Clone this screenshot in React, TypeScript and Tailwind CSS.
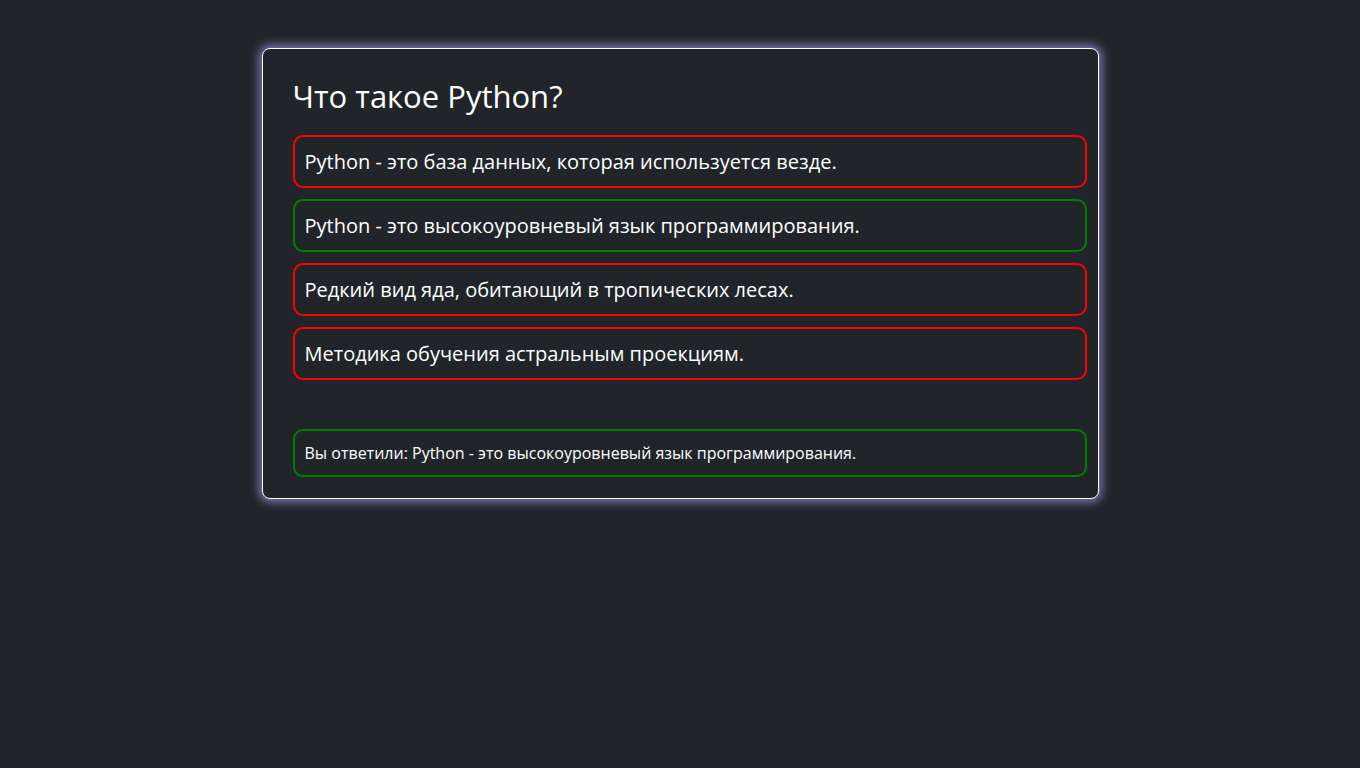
const answers = [
  { text: 'Python - это база данных, которая используется везде.', correct: false },
  { text: 'Python - это высокоуровневый язык программирования.', correct: true },
  { text: 'Редкий вид яда, обитающий в тропических лесах.', correct: false },
  { text: 'Методика обучения астральным проекциям.', correct: false },
];

export default function App() {
  return (
    <div
      className="min-h-screen bg-[#212529] text-white pt-[48px]"
      style={{ fontFamily: '"Open Sans", "Noto Sans", sans-serif' }}
    >
      <div className="mx-auto w-[837px] rounded-lg border border-white bg-[#212529] shadow-[0_0_10px_3px_rgba(150,150,230,0.75)] pl-[30px] pr-[11px] pt-[29px] pb-[21px]">
        <h1 className="text-[31px] leading-[36px] font-medium mb-[21px]">Что такое Python?</h1>

        {/* Answers */}
        <div className="flex flex-col gap-[11px]">
          {answers.map((a) => (
            <div
              key={a.text}
              className={
                'h-[53px] flex items-center rounded-[10px] border-2 px-[10px] text-[20px] ' +
                (a.correct ? 'border-[#008000]' : 'border-[#ff0000]')
              }
            >
              {a.text}
            </div>
          ))}
        </div>

        {/* Result */}
        <div className="mt-[49px] h-[48px] flex items-center rounded-[10px] border-2 border-[#008000] px-[10px] text-[16px]">
          Вы ответили: Python - это высокоуровневый язык программирования.
        </div>
      </div>
    </div>
  );
}
